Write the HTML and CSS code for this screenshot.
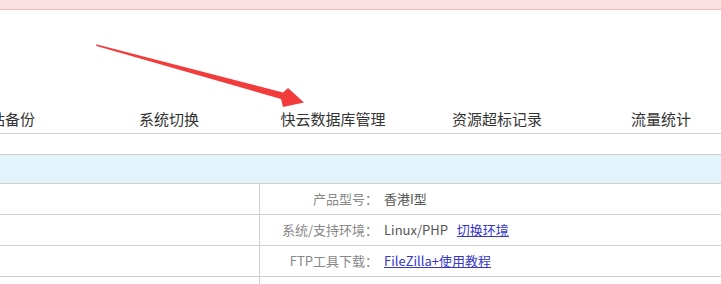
FILE: index.html
```html
<!DOCTYPE html>
<html>
<head>
  <meta charset="UTF-8">
  <title>主机管理</title>
  <link rel="stylesheet" href="styles.css">
</head>
<body>
  <div class="notice"></div>
  <ul class="tabs">
    <li>网站备份</li>
    <li>系统切换</li>
    <li>快云数据库管理</li>
    <li>资源超标记录</li>
    <li>流量统计</li>
  </ul>
  <div class="panel">
    <div class="panel-head"></div>
    <div class="row">
      <div class="cell-left"></div>
      <div class="label">产品型号：</div>
      <div class="value">香港I型</div>
    </div>
    <div class="row">
      <div class="cell-left"></div>
      <div class="label">系统/支持环境：</div>
      <div class="value">Linux/PHP <a href="#" class="link">切换环境</a></div>
    </div>
    <div class="row">
      <div class="cell-left"></div>
      <div class="label">FTP工具下载：</div>
      <div class="value"><a href="#">FileZilla+使用教程</a></div>
    </div>
    <div class="row">
      <div class="cell-left"></div>
      <div class="label"></div>
      <div class="value"></div>
    </div>
  </div>

  <svg class="arrow" width="721" height="284" viewBox="0 0 721 284">
    <polygon points="96,44.3 283,92.5 288,88 304,102.5 283,107 281,99 96.5,46" fill="#f23b3b"/>
  </svg>
</body>
</html>
```

FILE: styles.css
```css
body {
  margin: 0;
  font-family: "Noto Sans CJK SC", sans-serif;
  color: #333;
  overflow: hidden;
}
.notice {
  height: 9px;
  background-color: #fbe1e1;
  border-bottom: 1px solid #eebaba;
}
.tabs {
  display: flex;
  align-items: flex-end;
  list-style: none;
  margin: 0 0 0 -77px;
  padding: 0;
  height: 123px;
  border-bottom: 1px solid #cfcfcf;
}
.tabs li {
  flex: 0 0 164px;
  text-align: center;
  font-size: 15px;
  line-height: 29px;
  color: #333;
}
.panel {
  margin-top: 20px;
  border-top: 1px solid #cfcfcf;
  font-size: 13px;
}
.panel-head {
  height: 28px;
  background-color: #e3f3fb;
  border-bottom: 1px solid #cfcfcf;
}
.row {
  display: grid;
  grid-template-columns: 260px 118px 1fr;
  height: 30px;
  line-height: 30px;
  border-bottom: 1px solid #cfcfcf;
}
.cell-left {
  border-right: 1px solid #cfcfcf;
}
.label {
  text-align: right;
  color: #888;
}
.value {
  padding-left: 6px;
  color: #555;
}
.value a {
  color: #3636c8;
  text-decoration: underline;
}
.value .link {
  margin-left: 6px;
}
.arrow {
  position: absolute;
  left: 0;
  top: 0;
  pointer-events: none;
}
```
